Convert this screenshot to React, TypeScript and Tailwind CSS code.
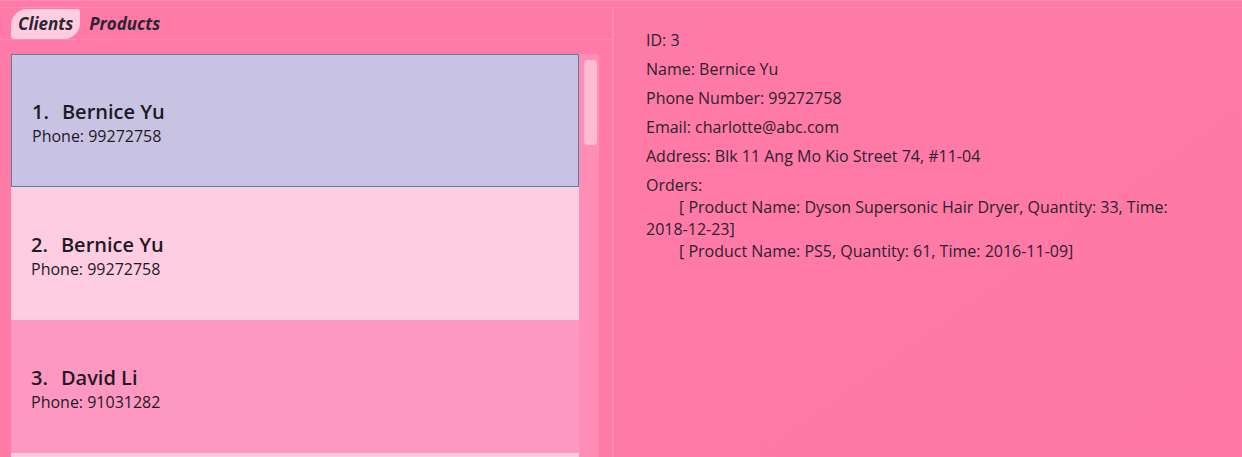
const clients = [
  { index: 1, name: 'Bernice Yu', phone: '99272758' },
  { index: 2, name: 'Bernice Yu', phone: '99272758' },
  { index: 3, name: 'David Li', phone: '91031282' },
];

function ClientCard({ client, selected }: { client: (typeof clients)[number]; selected: boolean }) {
  const colour = selected
    ? 'bg-[#c9c3e3] border border-[#5b7f9f]'
    : client.index % 2 === 0
      ? 'bg-[#ffcde2]'
      : 'bg-[#ff98c1]';
  return (
    <div className={`flex h-[133px] shrink-0 flex-col justify-center pl-[20px] pt-[4px] text-[#1e1a24] ${colour}`}>
      <div className="text-[20px] font-semibold leading-[26px]">
        {client.index}.<span className="ml-[13px]">{client.name}</span>
      </div>
      <div className="text-[16px] leading-[22px]">Phone: {client.phone}</div>
    </div>
  );
}

function DetailPanel() {
  const rows = [
    'ID: 3',
    'Name: Bernice Yu',
    'Phone Number: 99272758',
    'Email: charlotte@abc.com',
    'Address: Blk 11 Ang Mo Kio Street 74, #11-04',
  ];
  return (
    <div className="flex flex-1 flex-col gap-[7px] bg-gradient-to-br from-[#ff7ba7] to-[#ff78a5] pl-[32px] pr-[30px] pt-[21px] text-[16px] leading-[22px] text-[#2b2230]">
      {rows.map((row) => (
        <div key={row}>{row}</div>
      ))}
      <div>
        <div>Orders:</div>
        <div className="indent-[33px]">
          [ Product Name: Dyson Supersonic Hair Dryer, Quantity: 33, Time: 2018-12-23]
        </div>
        <div className="indent-[33px]">[ Product Name: PS5, Quantity: 61, Time: 2016-11-09]</div>
      </div>
    </div>
  );
}

export default function App() {
  return (
    <div
      className="flex h-[457px] w-[1242px] flex-col overflow-hidden bg-[#ff7aa6]"
      style={{ fontFamily: '"Open Sans", "Noto Sans", sans-serif' }}
    >
      <div className="h-[8px] shrink-0 border-t border-b border-[#ff8ab2]" />
      <div className="flex min-h-0 flex-1">
        <div className="flex w-[612px] shrink-0 flex-col">
          <div className="flex h-[32px] shrink-0 items-center gap-[9px] border-b border-[#ff8ab2] pl-[11px] pt-[1px] text-[17px] font-bold italic text-[#2c2634]">
            <div className="flex h-[30px] items-center rounded-tl-[16px] rounded-br-[16px] rounded-tr-[3px] rounded-bl-[3px] bg-[#ffcde0] px-[7px]">
              Clients
            </div>
            <div className="flex h-[30px] items-center">Products</div>
          </div>
          <div className="ml-[11px] mt-[14px] flex min-h-0 w-[588px] flex-1">
            <div className="flex w-[568px] flex-col overflow-hidden">
              {clients.map((client) => (
                <ClientCard key={client.index} client={client} selected={client.index === 1} />
              ))}
              <div className="h-[133px] shrink-0 bg-[#ffcde2]" />
            </div>
            <div className="w-[20px] bg-[#ff8eb7] pl-[5px] pt-[6px]">
              <div className="h-[85px] w-[13px] rounded-[4px] bg-[#ffbbd4]" />
            </div>
          </div>
        </div>
        <div className="w-[2px] shrink-0 bg-[#ff8ab2]" />
        <DetailPanel />
      </div>
    </div>
  );
}
